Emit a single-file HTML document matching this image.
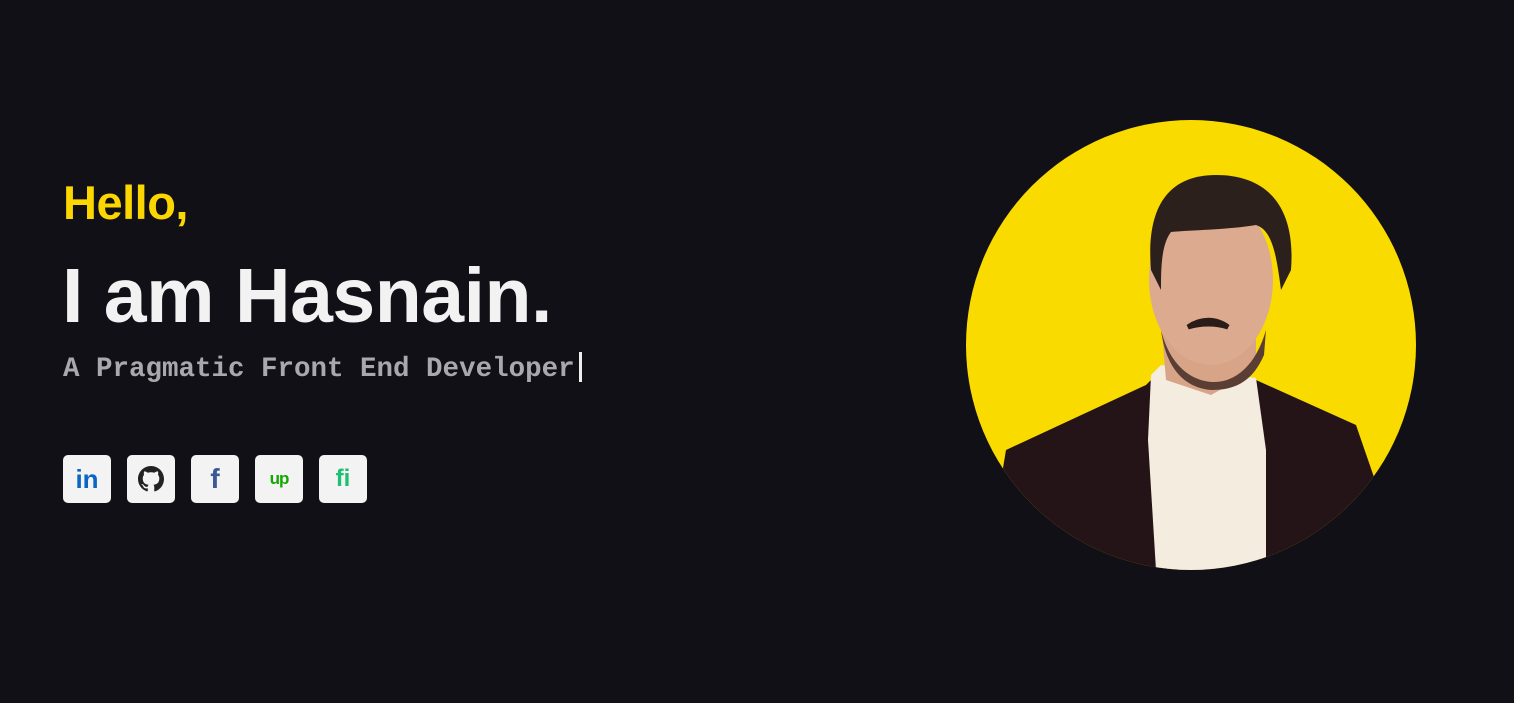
<!DOCTYPE html>
<html><head><meta charset="utf-8"><style>
body{margin:0;width:1514px;height:703px;background:#111017;overflow:hidden;font-family:"Liberation Sans",sans-serif;position:relative}
.h{position:absolute;left:63px;top:175px;color:#fcd600;font-weight:bold;font-size:47px;margin:0;letter-spacing:-0.5px}
.n{position:absolute;left:62px;top:252px;color:#f2f2f2;font-weight:bold;font-size:77px;margin:0;letter-spacing:-0.5px}
.s{position:absolute;left:63px;top:352px;color:#a9a9ad;font-family:"Liberation Mono",monospace;font-weight:bold;font-size:27.5px;white-space:nowrap}
.s span{display:inline-block;width:3px;height:30px;background:#eee;vertical-align:-6px;margin-left:4px}
.ic{position:absolute;top:455px;width:48px;height:48px;background:#f3f3f4;border-radius:5px;display:flex;align-items:center;justify-content:center}
</style></head><body>
<div class="h">Hello,</div>
<div class="n">I am Hasnain.</div>
<div class="s">A Pragmatic Front End Developer<span></span></div>
<div class="ic" style="left:63px"><span style="color:#0a66c2;font-weight:bold;font-size:26px;font-family:'Liberation Sans'">in</span></div>
<div class="ic" style="left:127px"><svg width="26" height="26" viewBox="0 0 16 16"><path fill="#222" d="M8 0C3.58 0 0 3.58 0 8c0 3.540 2.29 6.53 5.47 7.59.4.07.55-.17.55-.38 0-.19-.01-.82-.01-1.49-2.01.37-2.530-.49-2.690-.94-.09-.23-.48-.94-.82-1.13-.28-.15-.68-.52-.01-.53.63-.01 1.080.58 1.230.82.72 1.21 1.87.87 2.33.66.07-.52.28-.87.51-1.07-1.78-.2-3.64-.89-3.64-3.95 0-.87.31-1.59.82-2.15-.08-.2-.36-1.02.08-2.12 0 0 .67-.21 2.2.82.64-.18 1.32-.27 2-.27.68 0 1.36.09 2 .27 1.53-1.04 2.2-.82 2.2-.82.44 1.1.16 1.92.08 2.12.51.56.82 1.27.82 2.15 0 3.07-1.87 3.75-3.65 3.95.29.25.54.73.54 1.48 0 1.07-.01 1.93-.01 2.2 0 .21.15.46.55.38A8.013 8.013 0 0016 8c0-4.42-3.58-8-8-8z"/></svg></div>
<div class="ic" style="left:191px"><span style="color:#3b5998;font-weight:bold;font-size:28px">f</span></div>
<div class="ic" style="left:255px"><span style="color:#14a800;font-weight:bold;font-size:17px;letter-spacing:-1px">up</span></div>
<div class="ic" style="left:319px"><span style="color:#1dbf73;font-weight:bold;font-size:24px">fi</span></div>
<svg style="position:absolute;left:966px;top:120px" width="450" height="450" viewBox="0 0 450 450">
<defs><clipPath id="c"><circle cx="225" cy="225" r="225"/></clipPath></defs>
<g clip-path="url(#c)">
<rect width="450" height="450" fill="#fadb00"/>
<path d="M40 330 L180 265 L195 250 L290 260 L390 305 L440 450 L20 450 Z" fill="#241417"/>
<path d="M185 255 L195 245 L290 258 L300 330 L300 450 L190 450 L182 320 Z" fill="#f4ecdf"/>
<path d="M195 200 L200 260 L245 275 L290 250 L290 190 Z" fill="#d8a488"/>
<ellipse cx="245" cy="160" rx="62" ry="85" fill="#dcaa8e"/>
<path d="M185 150 C180 90 200 55 250 55 C300 55 330 85 325 150 L315 170 C310 130 305 110 290 105 C260 110 225 110 205 112 C195 125 195 150 195 170 Z" fill="#2c201c"/>
<path d="M222 207 C235 198 250 198 262 207 C250 203 235 203 222 207 Z" stroke="#2a1c18" stroke-width="5" fill="none"/>
<path d="M195 210 C205 250 230 262 248 262 C270 262 290 245 300 210 L298 235 C285 265 265 270 245 270 C220 268 200 250 195 210Z" fill="#5a3e33"/>
</g></svg>
</body></html>
